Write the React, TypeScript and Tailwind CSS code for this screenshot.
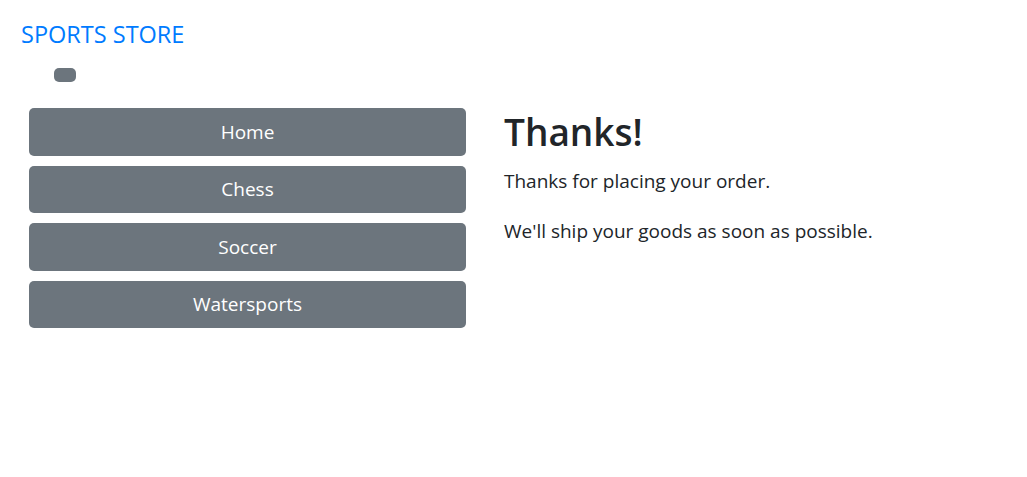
import React from "react";

const font = { fontFamily: '"Open Sans", "Noto Sans", sans-serif' };

export default function App() {
  const cats = ["Home", "Chess", "Soccer", "Watersports"];
  return (
    <div className="min-h-[477px] w-full bg-white text-[#212529]" style={font}>
      <nav className="px-[21px] pt-[16px] h-[54px]">
        <span className="text-[23.5px] leading-[37px] text-[#007bff]">SPORTS STORE</span>
      </nav>
      <div className="pl-[54px] pt-[14px] h-[54px]">
        <button className="block w-[22px] h-[14px] rounded-[5px] bg-[#6c757d]"></button>
      </div>
      <div className="flex pl-[29px]">
        <div className="w-[437px] flex flex-col gap-[10px]">
          {cats.map((c) => (
            <button
              key={c}
              className="h-[47.5px] w-full rounded-[5px] bg-[#6c757d] text-white text-[19px] leading-[30px]"
            >
              {c}
            </button>
          ))}
        </div>
        <div className="ml-[38px]">
          <h2 className="text-[37px] leading-[48px] font-semibold mb-[10px]">Thanks!</h2>
          <p className="text-[19px] leading-[30px] mb-[20px]">Thanks for placing your order.</p>
          <p className="text-[19px] leading-[30px]">We'll ship your goods as soon as possible.</p>
        </div>
      </div>
    </div>
  );
}
